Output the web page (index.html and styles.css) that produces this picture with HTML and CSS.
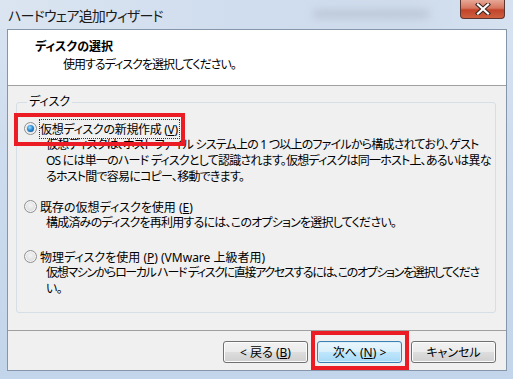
FILE: index.html
```html
<!DOCTYPE html>
<html lang="ja">
<head>
    <meta charset="UTF-8">
    <title>ハードウェア追加ウィザード</title>
    <link rel="stylesheet" href="styles.css">
</head>
<body>

    <div class="window">
        <!-- Title bar -->
        <div class="titlebar">
            <span class="title">ハードウェア追加ウィザード</span>
            <span class="blur"></span>
            <div class="close">
                <svg width="16" height="12" viewBox="0 0 16 12">
                    <path d="M3 1.5 L13 10.5 M13 1.5 L3 10.5" stroke="#3a2420" stroke-width="4.2" stroke-linecap="square"/>
                    <path d="M3 1.5 L13 10.5 M13 1.5 L3 10.5" stroke="#ffffff" stroke-width="2.2" stroke-linecap="square"/>
                </svg>
            </div>
        </div>

        <div class="client">
            <!-- Header -->
            <div class="header">
                <div class="header-title">ディスクの選択</div>
                <div class="header-sub">使用するディスクを選択してください。</div>
            </div>

            <!-- Options -->
            <div class="content">
                <fieldset class="group">
                    <legend>ディスク</legend>

                    <div class="option first">
                        <label class="radio-row">
                            <span class="radio checked"></span>
                            <span class="focus">仮想ディスクの新規作成 (<u>V</u>)</span>
                        </label>
                        <p class="desc">仮想ディスクは、ホスト ファイル システム上の 1 つ以上のファイルから構成されており、ゲスト<br>OS には単一のハード ディスクとして認識されます。仮想ディスクは同一ホスト上、あるいは異な<br>るホスト間で容易にコピー、移動できます。</p>
                    </div>

                    <div class="option second">
                        <label class="radio-row">
                            <span class="radio"></span>
                            <span>既存の仮想ディスクを使用 (<u>E</u>)</span>
                        </label>
                        <p class="desc">構成済みのディスクを再利用するには、このオプションを選択してください。</p>
                    </div>

                    <div class="option third">
                        <label class="radio-row">
                            <span class="radio"></span>
                            <span>物理ディスクを使用 (<u>P</u>) (VMware 上級者用)</span>
                        </label>
                        <p class="desc"><span class="tight">仮想マシンからローカル ハード ディスクに直接アクセスするには、このオプションを選択してくださ</span><br>い。</p>
                    </div>
                </fieldset>
            </div>

            <!-- Buttons -->
            <div class="footer">
                <button class="btn">&lt; 戻る (<u>B</u>)</button>
                <button class="btn default">次へ (<u>N</u>) &gt;</button>
                <button class="btn">キャンセル</button>
            </div>
        </div>

        <!-- Red annotation boxes -->
        <div class="mark mark-option"></div>
        <div class="mark mark-next"></div>
    </div>

</body>
</html>
```

FILE: styles.css
```css
body {
    margin: 0;
    font-family: "Noto Sans", "Noto Sans CJK JP", sans-serif;
    font-size: 12px;
    color: #000;
    font-feature-settings: "palt";
}

.window {
    position: relative;
    width: 513px;
    height: 379px;
    overflow: hidden;
    background: linear-gradient(to bottom, #d9e4f1 0%, #cddcee 40%, #c3d5ea 100%);
}

.titlebar {
    height: 29px;
    display: flex;
    align-items: flex-start;
    background: linear-gradient(to right, #dbe5f1 0%, #d0ddee 45%, #cfdcec 80%, #d6e2f0 100%);
}

.title {
    padding: 5px 0 0 8px;
    font-size: 14px;
    color: #1b1b1b;
    letter-spacing: -0.8px;
}

.blur {
    flex: 1;
    height: 8px;
    margin: 10px 30px 0 150px;
    background: #a9b3c2;
    filter: blur(4px);
    opacity: 0.55;
    border-radius: 4px;
}

.close {
    width: 43px;
    height: 18px;
    margin-right: 8px;
    border: 1px solid #5c3630;
    border-top: none;
    border-radius: 0 0 4px 4px;
    background: linear-gradient(to bottom, #e7a797 0%, #d7775f 45%, #c2442a 55%, #cf5f3f 100%);
    display: flex;
    justify-content: center;
    align-items: center;
}

.client {
    margin: 0 6px 0 7px;
    height: 342px;
    background: #f0f0f0;
    border: 1px solid #8596aa;
    border-top: none;
    box-sizing: border-box;
}

.header {
    height: 57px;
    background: #fff;
    border-top: 1px solid #8596aa;
    border-bottom: 1px solid #a0a0a0;
    box-sizing: border-box;
    padding: 9px 0 0 27px;
}

.header-title {
    font-weight: bold;
    line-height: 16px;
}

.header-sub {
    margin: 2px 0 0 28px;
    line-height: 16px;
    letter-spacing: -1px;
}

.content {
    padding: 8px 10px 0 8px;
}

.group {
    margin: 0;
    height: 219px;
    box-sizing: border-box;
    border: 1px solid #d5dfe5;
    border-radius: 3px;
    padding: 10px 0 0 7px;
}

.group legend {
    padding: 0 2px;
    margin-left: 3px;
    line-height: 16px;
}

.option {
    margin-bottom: 13px;
}

.second {
    margin-bottom: 17px;
}

.radio-row {
    display: flex;
    align-items: center;
    gap: 3px;
    height: 17px;
}

.radio {
    width: 11px;
    height: 11px;
    border: 1px solid #8e8f8f;
    border-radius: 50%;
    background: radial-gradient(circle at 50% 40%, #f4f4f4 0%, #dcdcdc 70%, #cfcfcf 100%);
    box-shadow: inset 0 0 0 1px #f6f6f6;
    position: relative;
}

.radio.checked::after {
    content: "";
    position: absolute;
    left: 2px;
    top: 2px;
    width: 7px;
    height: 7px;
    border-radius: 50%;
    background: radial-gradient(circle at 40% 35%, #9fe0ff 0%, #2d8fd8 45%, #0a3f8a 100%);
}

.focus {
    outline: 1px dotted #333;
    outline-offset: 0;
    padding: 0 1px 0 0;
    letter-spacing: -0.3px;
}

.desc {
    margin: 0 0 0 22px;
    line-height: 16px;
    white-space: nowrap;
    letter-spacing: -0.78px;
}

.tight {
    letter-spacing: -1.35px;
}

.footer {
    margin-top: 17px;
    border-top: 1px solid #a0a0a0;
    display: flex;
    justify-content: flex-end;
    gap: 9px;
    padding: 10px 10px 0 0;
}

.btn {
    width: 85px;
    height: 22px;
    font-family: inherit;
    font-size: 12px;
    font-feature-settings: "palt";
    color: #000;
    border: 1px solid #707070;
    border-radius: 3px;
    background: linear-gradient(to bottom, #f2f2f2 0%, #ebebeb 48%, #dddddd 52%, #cfcfcf 100%);
    box-shadow: inset 0 0 0 1px #fcfcfc;
    padding: 0;
}

.btn.default {
    border-color: #3c7fb1;
    background: linear-gradient(to bottom, #eaf6fd 0%, #d9f0fc 48%, #bee6fd 52%, #a7d9f5 100%);
    box-shadow: inset 0 0 0 1px #d8eefb;
}

.mark {
    position: absolute;
    border: 4px solid #ec1c24;
}

.mark-option {
    left: 14px;
    top: 113px;
    width: 163px;
    height: 25px;
}

.mark-next {
    left: 311px;
    top: 331px;
    width: 90px;
    height: 31px;
}
```
